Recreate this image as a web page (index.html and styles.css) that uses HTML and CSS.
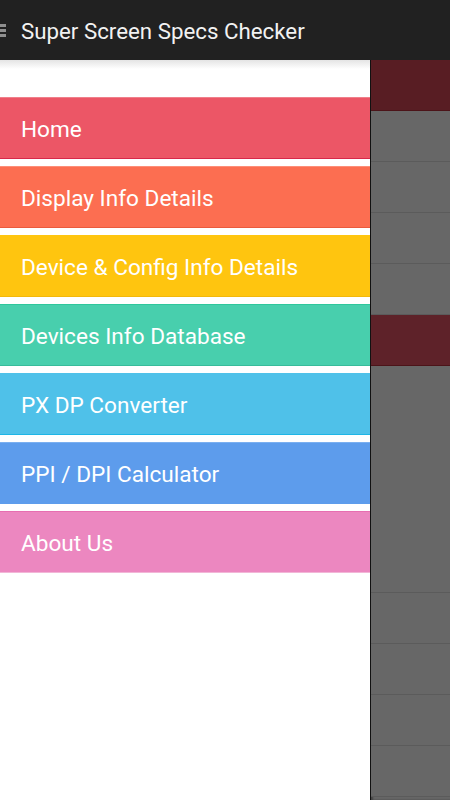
FILE: index.html
```html
<!DOCTYPE html>
<html>
<head>
<meta charset="utf-8">
<link rel="stylesheet" href="styles.css">
</head>
<body>
<header class="toolbar">
  <span class="burger"><i></i><i></i><i></i></span>
  <span class="title">Super Screen Specs Checker</span>
</header>
<div class="main">
  <nav class="drawer">
    <div class="item home">Home</div>
    <div class="item display">Display Info Details</div>
    <div class="item device">Device &amp; Config Info Details</div>
    <div class="item db">Devices Info Database</div>
    <div class="item px">PX DP Converter</div>
    <div class="item ppi">PPI / DPI Calculator</div>
    <div class="item about">About Us</div>
  </nav>
  <div class="behind">
    <div class="row red"></div>
    <div class="row"></div>
    <div class="row"></div>
    <div class="row"></div>
    <div class="row"></div>
    <div class="row red"></div>
    <div class="row tall"></div>
    <div class="row"></div>
    <div class="row"></div>
    <div class="row"></div>
    <div class="row"></div>
  </div>
</div>
</body>
</html>
```
FILE: styles.css
```css
html, body {
  margin: 0;
  padding: 0;
  width: 450px;
  height: 800px;
  overflow: hidden;
  background: #fff;
  font-family: Roboto, "Liberation Sans", sans-serif;
}
.toolbar {
  height: 60px;
  background: #212121;
  display: flex;
  align-items: center;
  position: relative;
  z-index: 2;
}
.burger {
  width: 6px;
  display: flex;
  flex-direction: column;
  gap: 2px;
  margin-top: 0;
}
.burger i {
  display: block;
  height: 3px;
  background: #8f8f8f;
}
.title {
  margin-left: 15px;
  color: #f2f2f2;
  font-size: 22.3px;
  margin-top: 1px;
}
.main {
  display: flex;
  height: 740px;
}
.drawer {
  width: 370px;
  flex: none;
  background: #fff;
  border-right: 1px solid #111;
  padding-top: 37px;
  display: flex;
  flex-direction: column;
  gap: 7px;
  box-sizing: content-box;
  background-image: linear-gradient(#e4e4e4, #fff 9px);
  background-repeat: no-repeat;
}
.item {
  height: 60px;
  line-height: 63px;
  overflow: hidden;
  padding-left: 21px;
  color: #fff;
  font-size: 22.6px;
  border-top: 1px solid;
  border-bottom: 1px solid;
}
.home { background: #ec5666; border-top-color: #f07f8a; border-bottom-color: #d8284a; }
.display { background: #fc6e51; border-top-color: #fd8e78; border-bottom-color: #ea5a3d; }
.device { background: #ffc50f; border-top-color: #ffc50f; border-bottom-color: #f3b80a; }
.db { background: #48cfad; border-top-color: #2fc79c; border-bottom-color: #37bc9b; }
.px { background: #4fc1e9; border-top-color: #4fc1e9; border-bottom-color: #1eb6e6; }
.ppi { background: #5d9cec; border-top-color: #7aaff0; border-bottom-color: #5d9cec; }
.about { background: #ec87c0; border-top-color: #e76eb1; border-bottom-color: #f2b6d7; }
.behind {
  flex: 1;
  display: flex;
  flex-direction: column;
  background: #666;
  box-shadow: inset 2px 0 2px rgba(0,0,0,0.35);
}
.row {
  height: 50px;
  flex: none;
  background: #676767;
  border-bottom: 1px solid #5b5b5b;
}
.row.red {
  background: #581d23;
  border-bottom-color: #4c1419;
}
.row:nth-child(6) { background: #5e2229; }
.row.tall {
  height: 226px;
}
```
